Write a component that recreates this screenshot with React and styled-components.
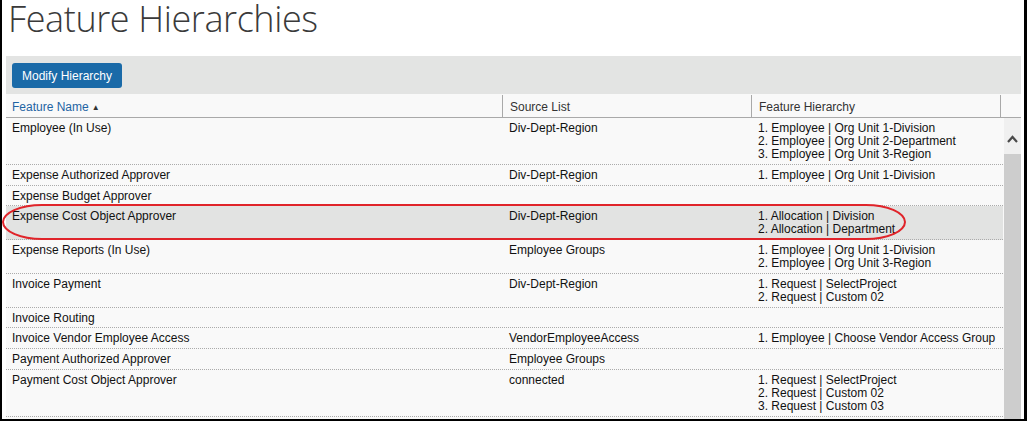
import React from 'react'
import styled, { createGlobalStyle } from 'styled-components'

const GlobalStyle = createGlobalStyle`
    html, body {
        margin: 0;
        padding: 0;
        background: #ffffff;
    }
    body {
        font-family: "Liberation Sans", Arial, sans-serif;
        font-size: 12px;
        color: #111;
    }
`

const rows = [
    { name: 'Employee (In Use)', source: 'Div-Dept-Region', hierarchy: ['1. Employee | Org Unit 1-Division', '2. Employee | Org Unit 2-Department', '3. Employee | Org Unit 3-Region'] },
    { name: 'Expense Authorized Approver', source: 'Div-Dept-Region', hierarchy: ['1. Employee | Org Unit 1-Division'] },
    { name: 'Expense Budget Approver', source: '', hierarchy: [] },
    { name: 'Expense Cost Object Approver', source: 'Div-Dept-Region', hierarchy: ['1. Allocation | Division', '2. Allocation | Department'], selected: true },
    { name: 'Expense Reports (In Use)', source: 'Employee Groups', hierarchy: ['1. Employee | Org Unit 1-Division', '2. Employee | Org Unit 3-Region'] },
    { name: 'Invoice Payment', source: 'Div-Dept-Region', hierarchy: ['1. Request | SelectProject', '2. Request | Custom 02'] },
    { name: 'Invoice Routing', source: '', hierarchy: [] },
    { name: 'Invoice Vendor Employee Access', source: 'VendorEmployeeAccess', hierarchy: ['1. Employee | Choose Vendor Access Group'] },
    { name: 'Payment Authorized Approver', source: 'Employee Groups', hierarchy: [] },
    { name: 'Payment Cost Object Approver', source: 'connected', hierarchy: ['1. Request | SelectProject', '2. Request | Custom 02', '3. Request | Custom 03'] },
]

const FeatureHierarchies = () => {
    return (
        <Frame>
            <GlobalStyle />
            <Title>Feature Hierarchies</Title>
            <Panel>
                <Toolbar>
                    <Button type="button">Modify Hierarchy</Button>
                </Toolbar>

                <HeaderRow>
                    <HeadCell $sorted>Feature Name <SortArrow>▲</SortArrow></HeadCell>
                    <HeadCell>Source List</HeadCell>
                    <HeadCell>Feature Hierarchy</HeadCell>
                    <HeadCell />
                </HeaderRow>

                <Body>
                    <Rows>
                        {rows.map((row) => (
                            <Row key={row.name} $selected={row.selected}>
                                <Cell>{row.name}</Cell>
                                <Cell>{row.source}</Cell>
                                <Cell>
                                    {row.hierarchy.map((line) => (
                                        <div key={line}>{line}</div>
                                    ))}
                                </Cell>
                            </Row>
                        ))}
                    </Rows>
                    <Scrollbar>
                        <ScrollButton>
                            <svg width="11" height="8" viewBox="0 0 11 8">
                                <polyline points="1,7 5.5,2 10,7" fill="none" stroke="#4a4a4a" strokeWidth="2.2" />
                            </svg>
                        </ScrollButton>
                        <Thumb />
                    </Scrollbar>
                </Body>
            </Panel>
            <Highlight />
        </Frame>
    )
}

export default FeatureHierarchies

const Frame = styled.div`
    position: relative;
    box-sizing: border-box;
    width: 1027px;
    height: 421px;
    overflow: hidden;
    background: #ffffff;
    border: 2px solid #000;
    border-top: none;
    border-right-width: 3px;
`

const Title = styled.h1`
    margin: 0;
    height: 56px;
    padding: 0 0 0 6px;
    font-family: "Open Sans", "Liberation Sans", sans-serif;
    font-weight: 300;
    font-size: 36px;
    line-height: 38px;
    color: #3a3a3a;
    letter-spacing: -0.4px;
`

const Panel = styled.div`
    margin: 0 3px 0 4px;
    background: #f9f9f9;
`

const Toolbar = styled.div`
    display: flex;
    align-items: center;
    height: 38px;
    padding: 0 6px;
    background: #e3e4e3;
`

const Button = styled.button`
    height: 25px;
    width: 110px;
    padding: 0;
    border: none;
    border-radius: 3px;
    background: #1a6aa8;
    color: #fff;
    font-family: "Liberation Sans", Arial, sans-serif;
    font-size: 12px;
    margin-top: 1px;
`

const HeaderRow = styled.div`
    display: grid;
    grid-template-columns: 496px 249px 249px 21px;
    height: 23px;
    border-bottom: 1px solid #a9a9a9;
    background: #f9f9f9;
`

const HeadCell = styled.div`
    display: flex;
    align-items: center;
    gap: 3px;
    padding: 1px 7px 0;
    color: ${(p) => (p.$sorted ? '#1f64a3' : '#333')};
    border-left: 1px solid #a9a9a9;
    margin: 1px 0 0;

    &:first-child {
        border-left: none;
        padding-left: 6px;
    }
`

const SortArrow = styled.span`
    font-size: 8px;
    color: #333;
    margin-top: 1px;
`

const Body = styled.div`
    display: flex;
    align-items: flex-start;
`

const Rows = styled.div`
    width: 997px;
`

const Row = styled.div`
    display: grid;
    grid-template-columns: 496px 249px 252px;
    border-bottom: 1px dotted #ababab;
    background: ${(p) => (p.$selected ? '#e2e3e2' : '#f9f9f9')};
`

const Cell = styled.div`
    padding: 4px 7px 2.75px;
    line-height: 13px;
    min-height: 13px;
    color: #111;

    &:first-child {
        padding-left: 6px;
    }
`

const Scrollbar = styled.div`
    display: flex;
    flex-direction: column;
    width: 17px;
    height: 320px;
    margin-left: 1px;
    background: #f0f0f0;
`

const ScrollButton = styled.div`
    display: flex;
    align-items: center;
    justify-content: center;
    height: 36px;
    padding-top: 6px;
    box-sizing: border-box;
`

const Thumb = styled.div`
    flex: 1;
    background: #cdcdcd;
`

const Highlight = styled.div`
    position: absolute;
    left: 0;
    top: 204px;
    width: 904px;
    height: 36px;
    box-sizing: border-box;
    border: 2px solid #e0242a;
    border-radius: 40px / 18px;
    pointer-events: none;
`
